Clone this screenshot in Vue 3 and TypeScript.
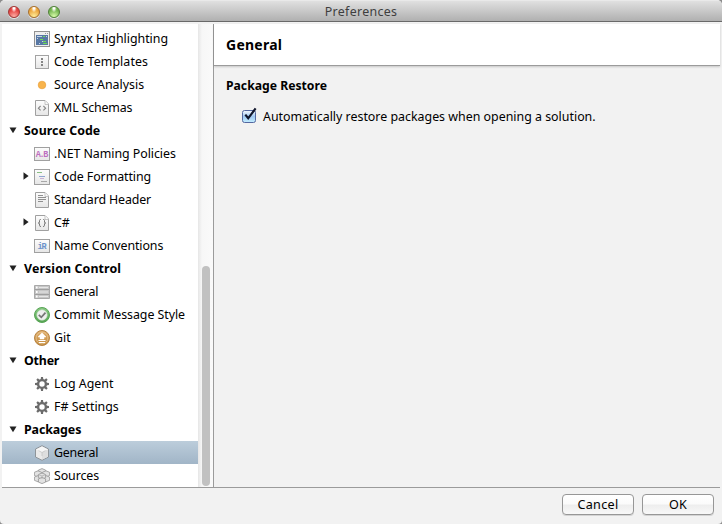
<script setup lang="ts">
import { ref } from 'vue'

interface Row {
  label: string
  icon?: string
  arrow?: 'open' | 'closed'
  spacing: number
}

const rows: Row[] = [
  { label: 'Syntax Highlighting', icon: 'syntax', spacing: -0.01 },
  { label: 'Code Templates', icon: 'templates', spacing: 0.08 },
  { label: 'Source Analysis', icon: 'dot', spacing: 0 },
  { label: 'XML Schemas', icon: 'xml', spacing: -0.16 },
  { label: 'Source Code', arrow: 'open', spacing: 0.04 },
  { label: '.NET Naming Policies', icon: 'naming', spacing: -0.05 },
  { label: 'Code Formatting', icon: 'format', arrow: 'closed', spacing: -0.07 },
  { label: 'Standard Header', icon: 'header', spacing: -0.13 },
  { label: 'C#', icon: 'csharp', arrow: 'closed', spacing: 0 },
  { label: 'Name Conventions', icon: 'names', spacing: -0.1 },
  { label: 'Version Control', arrow: 'open', spacing: 0.1 },
  { label: 'General', icon: 'server', spacing: -0.2 },
  { label: 'Commit Message Style', icon: 'commit', spacing: -0.05 },
  { label: 'Git', icon: 'git', spacing: 0 },
  { label: 'Other', arrow: 'open', spacing: -0.2 },
  { label: 'Log Agent', icon: 'gear', spacing: 0 },
  { label: 'F# Settings', icon: 'gear', spacing: 0 },
  { label: 'Packages', arrow: 'open', spacing: -0.1 },
  { label: 'General', icon: 'cube', spacing: -0.2 },
  { label: 'Sources', icon: 'cubes', spacing: -0.1 },
]

const selected = ref(18)
const restore = ref(true)
const teeth = [0, 45, 90, 135, 180, 225, 270, 315]
const smallCubes = [[8, 0.6], [4, 2.8], [12, 2.8], [4, 7.6], [12, 7.6], [8, 5], [8, 9.4]]
</script>

<template>
  <div class="window">
    <svg class="defs" width="0" height="0">
      <defs>
        <linearGradient id="paper" x1="0" y1="0" x2="0" y2="1">
          <stop offset="0" stop-color="#fdfdfd" /><stop offset="1" stop-color="#e6e6e6" />
        </linearGradient>
        <linearGradient id="green" x1="0" y1="0" x2="0" y2="1">
          <stop offset="0" stop-color="#8cca86" /><stop offset="1" stop-color="#55a352" />
        </linearGradient>
        <linearGradient id="orange" x1="0" y1="0" x2="0" y2="1">
          <stop offset="0" stop-color="#e0b070" /><stop offset="1" stop-color="#c28a3c" />
        </linearGradient>
        <linearGradient id="box" x1="0" y1="0" x2="0" y2="1">
          <stop offset="0" stop-color="#fbfcff" /><stop offset="0.5" stop-color="#a0c8f2" /><stop offset="1" stop-color="#c3eeff" />
        </linearGradient>
      </defs>
    </svg>

    <header class="titlebar">
      <div class="lights">
        <span class="light red"></span><span class="light amber"></span><span class="light lime"></span>
      </div>
      <span class="title">Preferences</span>
    </header>

    <main class="body">
      <nav class="list">
        <div
          v-for="(row, i) in rows"
          :key="i"
          class="row"
          :class="{ group: !row.icon, selected: selected === i }"
          @click="row.icon && (selected = i)"
        >
          <span class="arrow">
            <svg v-if="row.arrow === 'open'" class="tri-open" width="8" height="7" viewBox="0 0 8 7">
              <path d="M0.5 0.5H7.5L4 6.3Z" fill="#222" />
            </svg>
            <svg v-else-if="row.arrow" class="tri-closed" width="6" height="8" viewBox="0 0 6 8">
              <path d="M0.5 0.3V7.7L5.6 4Z" fill="#222" />
            </svg>
          </span>
          <svg v-if="row.icon" class="icon" width="16" height="16" viewBox="0 0 16 16">
            <g v-if="row.icon === 'syntax'">
              <rect x="0.5" y="0.5" width="15" height="15" fill="#eee" stroke="#929292" />
              <path d="M11 2.5h1M13 2.5h1" stroke="#999" />
              <rect x="2" y="4" width="12" height="10" fill="#5878a4" />
              <path d="M3 5.5h5M12 5.5h1M3 7.5h1M8 10.5h1M5 12.5h1" stroke="#c3d2e6" />
              <path d="M9 5.5h2M6 8.5h3M9 10.5h3M9 12.5h4" stroke="#6ddc55" />
            </g>
            <g v-else-if="row.icon === 'templates'">
              <rect x="1.5" y="1.5" width="13" height="13" fill="url(#paper)" stroke="#a3a3a3" />
              <path d="M7 4h2v2H7zM7 7h2v2H7zM7 10h2v2H7z" fill="#858585" />
            </g>
            <circle v-else-if="row.icon === 'dot'" cx="8" cy="8" r="3.8" fill="#f8b44d" stroke="#e9a13b" stroke-width="0.7" />
            <g v-else-if="['xml', 'header', 'csharp'].includes(row.icon)">
              <path d="M1.5 0.5H11L14.5 4V15.5H1.5Z" fill="url(#paper)" stroke="#a0a0a0" />
              <path d="M11 0.5V4.5H14.5" fill="#fafafa" stroke="#b7b7b7" stroke-width="0.8" />
              <path v-if="row.icon === 'xml'" d="M6.6 6L4.4 8.2L6.6 10.4M9.4 6L11.6 8.2L9.4 10.4" fill="none" stroke="#858585" stroke-width="1.1" />
              <path v-else-if="row.icon === 'header'" d="M4 3.5h5M4 5.5h8M4 7.5h8M4 9.5h5" stroke="#8f8f8f" />
              <path v-else d="M7 4.5H6.5Q5.5 4.5 5.5 5.5V7Q5.5 8 4.3 8Q5.5 8 5.5 9V10.5Q5.5 11.5 7 11.5M9 4.5H9.5Q10.5 4.5 10.5 5.5V7Q10.5 8 11.7 8Q10.5 8 10.5 9V10.5Q10.5 11.5 9 11.5" fill="none" stroke="#777" />
            </g>
            <g v-else-if="row.icon === 'naming' || row.icon === 'names'">
              <rect x="0.5" y="1.5" width="15" height="13" fill="url(#paper)" stroke="#a0a0a0" />
              <text v-if="row.icon === 'naming'" class="glyph" x="8" y="11" fill="#bd6fc0" textLength="12.5">A.B</text>
              <text v-else class="glyph" x="8" y="11" fill="#6c92cb" textLength="9">iR</text>
            </g>
            <g v-else-if="row.icon === 'format'">
              <rect x="0.5" y="0.5" width="15" height="15" fill="url(#paper)" stroke="#a0a0a0" />
              <path d="M3 3.5h5" stroke="#8abf86" />
              <path d="M5 7.5h6" stroke="#92a6d0" />
              <path d="M6 9.5h4" stroke="#c9b2d4" />
              <path d="M7 12.5h6" stroke="#a7a7a7" />
            </g>
            <g v-else-if="row.icon === 'server'">
              <path d="M0.5 1.5h15v13h-15z" fill="#c6c6c6" stroke="#a9a9a9" />
              <path d="M1 5.5h14M1 10.5h14" stroke="#9f9f9f" />
              <path d="M5 3.5h9M5 8h9M5 12.5h9" stroke="#e6e6e6" />
              <path d="M2 3.5h1.6M2 8h1.6M2 12.5h1.6" stroke="#fff" stroke-width="1.8" />
            </g>
            <g v-else-if="row.icon === 'commit'">
              <circle cx="8" cy="8" r="7.5" fill="url(#green)" stroke="#58a556" />
              <circle cx="8" cy="8" r="5.2" fill="#efefef" stroke="#c4dfc2" stroke-width="0.6" />
              <path d="M4.8 7.8L7.3 10.3L11.5 5.7" fill="none" stroke="#777" stroke-width="1.8" />
            </g>
            <g v-else-if="row.icon === 'git'">
              <circle cx="8" cy="8" r="7.5" fill="url(#orange)" stroke="#b98544" />
              <circle cx="8" cy="8" r="5.9" fill="none" stroke="#edcfa0" stroke-width="0.6" />
              <path d="M8 2.8L12 7H10V9H6V7H4Z" fill="#fff" stroke="#fff" stroke-width="0.5" />
              <path d="M4.5 10.5h7M5 12.5h6" stroke="#fff" />
            </g>
            <g v-else-if="row.icon === 'gear'">
              <path v-for="a in teeth" :key="a" d="M6.6 4.5L7 1H9L9.4 4.5Z" fill="#6c6c6c" :transform="`rotate(${a} 8 8)`" />
              <circle cx="8" cy="8" r="3.9" fill="none" stroke="#6c6c6c" stroke-width="2.4" />
            </g>
            <g v-else-if="row.icon === 'cube'">
              <path d="M8 0.7L14.5 4V12L8 15.3L1.5 12V4Z" fill="#e9e9e9" stroke="#8e9499" stroke-linejoin="round" />
              <path d="M8 1.6L13.8 4.4L8 7.5L2.2 4.4Z" fill="#f7f7f7" />
              <path d="M8 7.5L13.8 4.6V11.7L8 14.6Z" fill="#dedede" />
              <path d="M4.5 5.6L8 7.5L11.5 5.6M8 7.5V11" fill="none" stroke="#c4c4c4" stroke-width="0.8" />
            </g>
            <g v-else>
              <path
                v-for="(c, n) in smallCubes"
                :key="n"
                d="M0 0L3.6 1.5V4.7L0 6.2L-3.6 4.7V1.5Z"
                fill="#e3e3e3"
                stroke="#949494"
                stroke-width="0.8"
                :transform="`translate(${c[0]} ${c[1]})`"
              />
              <path d="M8 8V11M5 6.8L8 8L11 6.8" fill="none" stroke="#a8a8a8" stroke-width="0.7" />
            </g>
          </svg>
          <span class="label" :style="{ letterSpacing: row.spacing + 'px' }">{{ row.label }}</span>
        </div>
      </nav>
      <div class="track"><div class="thumb"></div></div>
      <section class="pane">
        <h1 class="heading">General</h1>
        <div class="content">
          <h2 class="sub">Package Restore</h2>
          <div class="option" @click="restore = !restore">
            <svg class="check" width="17" height="18" viewBox="0 0 17 18">
              <rect x="1.5" y="4.5" width="13" height="12" rx="2" fill="url(#box)" stroke="#5568a0" />
              <path v-if="restore" d="M4.3 8.6L7.2 12.3L14.6 2.4" fill="none" stroke="#10162c" stroke-width="2.2" />
            </svg>
            <span class="option-text">Automatically restore packages when opening a solution.</span>
          </div>
        </div>
      </section>
    </main>

    <footer class="footer">
      <button class="btn">Cancel</button>
      <button class="btn">OK</button>
    </footer>
  </div>
</template>

<style>
body { background: #8c8c8c; overflow: hidden; }
</style>

<style scoped>
.window {
  width: 722px; height: 524px; box-sizing: border-box; overflow: hidden;
  display: flex; flex-direction: column; background: #f2f2f2; border-radius: 5px 5px 4px 4px;
  font-family: "Noto Sans", "Open Sans", sans-serif; font-size: 12.4px; color: #000;
}
.defs { position: absolute; }
.titlebar {
  height: 22px; flex: none; box-sizing: border-box; padding: 0 8px;
  display: grid; grid-template-columns: 1fr auto 1fr; align-items: center;
  background: linear-gradient(#f2f2f2 0, #e0e0e0 1px, #b0b0b0 21px); border-bottom: 1px solid #696969;
}
.lights { display: flex; gap: 8px; padding-top: 1px; }
.light { width: 12px; height: 12px; box-sizing: border-box; border-radius: 50%; box-shadow: 0 1px 0 #e4e4e4; }
.red { border: 1px solid #a03634; background: radial-gradient(ellipse at 50% 8%, #fff 0 10%, #f0646480 35%, transparent 45%), radial-gradient(circle at 50% 95%, #ffb0a8, #e2413e 65%); }
.amber { border: 1px solid #a66e2c; background: radial-gradient(ellipse at 50% 8%, #fff 0 10%, #f4c06080 35%, transparent 45%), radial-gradient(circle at 50% 95%, #fff09c, #eba33b 65%); }
.lime { border: 1px solid #4f8038; background: radial-gradient(ellipse at 50% 8%, #fff 0 10%, #94ca7080 35%, transparent 45%), radial-gradient(circle at 50% 95%, #dcffad, #73b34f 65%); }
.title { color: #3e3e3e; line-height: 20px; padding-top: 2px; letter-spacing: 0.32px; }
.body { height: 463px; flex: none; margin: 2px 2px 0; display: flex; border-bottom: 1px solid #9b9b9b; }
.list { width: 196px; padding-top: 3px; box-sizing: border-box; background: #fff; }
.row { height: 23px; display: flex; align-items: center; white-space: nowrap; }
.arrow { width: 32px; flex: none; display: flex; }
.group .arrow { width: 22px; }
.tri-open { margin-left: 7px; }
.tri-closed { margin-left: 21px; margin-top: -1px; }
.group { font-weight: 700; }
.icon { flex: none; margin-right: 4px; }
.glyph { font: 700 8.5px "Liberation Mono", monospace; text-anchor: middle; }
.selected { background: linear-gradient(#bccddb, #a1b5c7); }
.track {
  width: 15px; box-sizing: border-box; display: flex; flex-direction: column; justify-content: flex-end; align-items: center;
  padding: 0 0 1px; background: linear-gradient(90deg, #e6e6e6, #f7f7f7 4px, #fafafa);
}
.thumb { width: 8px; height: 220px; border-radius: 4px; background: #c1c1c1; }
.pane { flex: 1; border-left: 1px solid #9b9b9b; }
.heading {
  margin: 0; height: 42px; box-sizing: border-box; padding-left: 12px; line-height: 41px; font-size: 14px; font-weight: 700; letter-spacing: 0.25px;
  background: #fff; border-bottom: 1px solid #9b9b9b; box-shadow: 0 1px 2px #0000002e;
}
.content { padding: 11px 12px 0; }
.sub { margin: 0; font-size: 12.2px; line-height: 18px; font-weight: 700; }
.option { display: flex; align-items: center; margin: 11px 0 0 15px; height: 20px; }
.check { flex: none; margin: -2px 5px 0 0; }
.option-text { white-space: nowrap; }
.footer { flex: 1; display: flex; justify-content: flex-end; align-items: flex-start; gap: 8px; padding: 6px 8px 0 0; }
.btn {
  width: 72px; height: 21px; padding: 0; border: 1px solid #979797; border-radius: 4px; font: inherit; font-size: 12.6px; line-height: 18px; letter-spacing: 0.3px;
  color: #000; background: linear-gradient(#fff, #fbfbfb 45%, #eee 55%, #f8f8f8); box-shadow: 0 1px 0 #d4d4d4;
}
</style>
